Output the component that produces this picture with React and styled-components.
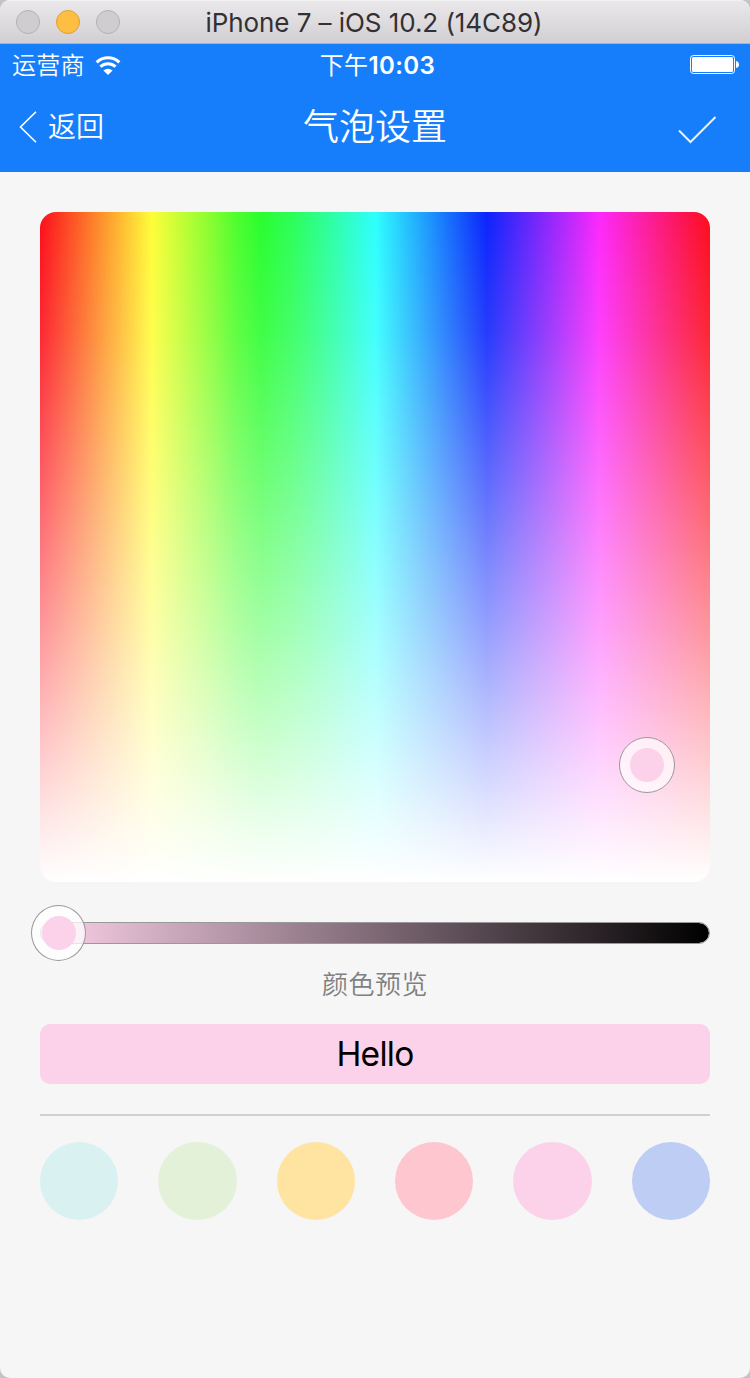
import React from 'react';
import styled, { createGlobalStyle } from 'styled-components';

const pink = '#fcd2ea';
const swatches = ['#d9f1f1', '#e3f1d9', '#ffe3a0', '#fec7cf', pink, '#bdcdf3'];

const GlobalStyle = createGlobalStyle`
  * { box-sizing: border-box; }
  body { margin: 0; background: #c4c4c4; }
`;

const Window = styled.div`
  width: 750px;
  height: 1378px;
  display: flex;
  flex-direction: column;
  overflow: hidden;
  border-radius: 10px;
  background: #f6f6f6;
  font-family: Inter, 'Noto Sans CJK SC', sans-serif;
`;

const TitleBar = styled.header`
  flex: none;
  height: 44px;
  display: grid;
  grid-template-columns: 190px 1fr 190px;
  align-items: center;
  background: linear-gradient(#eae8ea, #d1cfd1);
  border-top: 1px solid #f3f2f3;
  border-bottom: 1px solid #b3b0b4;
`;

const Lights = styled.div`
  display: flex;
  gap: 16px;
  padding-left: 16px;
`;

const Light = styled.span`
  width: 24px;
  height: 24px;
  border-radius: 50%;
  background: ${(p) => (p.$active ? '#fdbe41' : '#cfcdcf')};
  border: 1px solid ${(p) => (p.$active ? '#df9f35' : '#b3b1b3')};
`;

const WindowTitle = styled.div`
  justify-self: center;
  margin-right: 2px;
  padding-top: 2px;
  white-space: nowrap;
  font-size: 26px;
  line-height: 40px;
  letter-spacing: -0.06px;
  color: #333033;
`;

const Header = styled.div`
  flex: none;
  height: 128px;
  background: #167efb;
  color: #fff;
`;

const StatusBar = styled.div`
  height: 40px;
  display: grid;
  grid-template-columns: 1fr auto 1fr;
  align-items: center;
  padding: 0 11px 0 12px;
`;

const Carrier = styled.div`
  display: flex;
  align-items: center;
  gap: 10px;
  font-size: 24px;
  font-weight: 350;
  line-height: 36px;
  letter-spacing: 0.3px;
  padding-top: 3px;
`;

const Time = styled.div`
  font-size: 24px;
  font-weight: 600;
  line-height: 36px;
  letter-spacing: 0.4px;
  padding: 3px 0 0 4px;
`;

const TimePeriod = styled.span`
  font-weight: 400;
`;

const Battery = styled.svg`
  justify-self: end;
  margin-top: 2px;
`;

const NavBar = styled.nav`
  height: 88px;
  display: grid;
  grid-template-columns: 1fr auto 1fr;
  align-items: center;
  padding: 0 33px 0 19px;
`;

const BackButton = styled.div`
  display: flex;
  align-items: center;
  gap: 11px;
  font-size: 28px;
  font-weight: 350;
  line-height: 40px;
  margin-top: -2px;
`;

const NavTitle = styled.div`
  font-size: 36px;
  font-weight: 350;
  line-height: 52px;
  padding: 0 0 3px 14px;
`;

const CheckIcon = styled.svg`
  justify-self: end;
  margin-top: 3px;
`;

const Content = styled.main`
  flex: 1;
  display: flex;
  flex-direction: column;
  padding: 40px 40px 0;
`;

const hues = [
  '#fc0d1b',
  '#fffd38 16.7%',
  '#8dfd30 25.1%',
  '#50fd2e 29.2%',
  '#29fd2f 33%',
  '#2cfe58 37.6%',
  '#2dfe8c 41.8%',
  '#2dfffe 50.1%',
  '#0b24fb 66.7%',
  '#fd28fc 83.5%',
  '#fc0d1b',
].join(', ');

const fade = [
  'rgba(255, 255, 255, 0)',
  'rgba(255, 255, 255, 0.11) 18%',
  'rgba(255, 255, 255, 0.33) 40%',
  'rgba(255, 255, 255, 0.56) 62%',
  'rgba(255, 255, 255, 0.72) 76%',
  'rgba(255, 255, 255, 0.91) 92%',
  '#fff',
].join(', ');

const Spectrum = styled.div`
  flex: none;
  position: relative;
  height: 670px;
  border-radius: 16px;
  background: linear-gradient(${fade}), linear-gradient(90deg, ${hues});
`;

const Thumb = styled.div`
  position: absolute;
  left: ${(p) => p.$x}px;
  top: ${(p) => p.$y}px;
  width: ${(p) => p.$width || 56}px;
  height: 56px;
  display: grid;
  place-items: center;
  border: 1px solid #999;
  border-radius: 50%;
  background: rgba(255, 255, 255, ${(p) => p.$alpha});

  &::after {
    content: '';
    width: 34px;
    height: 34px;
    border-radius: 50%;
    background: ${pink};
  }
`;

const Track = styled.div`
  flex: none;
  position: relative;
  height: 22px;
  margin-top: 40px;
  border: 1px solid #999;
  border-radius: 11px;
  background: linear-gradient(90deg, ${pink}, #000) padding-box;
`;

const Caption = styled.div`
  margin-top: 21px;
  height: 40px;
  line-height: 40px;
  text-align: center;
  font-size: 26px;
  font-weight: 350;
  letter-spacing: 0.5px;
  color: #808080;
`;

const Preview = styled.div`
  flex: none;
  height: 60px;
  margin-top: 19px;
  border-radius: 10px;
  background: ${pink};
  line-height: 61px;
  text-align: center;
  font-size: 33.5px;
  letter-spacing: -0.7px;
  color: #000;
`;

const Divider = styled.hr`
  width: 100%;
  height: 2px;
  margin: 30px 0 26px;
  border: 0;
  background: #d0d0d0;
`;

const Swatches = styled.div`
  display: grid;
  grid-template-columns: repeat(6, 1fr);
  gap: 40px;
`;

const Swatch = styled.span`
  aspect-ratio: 1;
  border-radius: 50%;
  background: ${(p) => p.$color};
`;

export default function App() {
  return (
    <>
      <GlobalStyle />
      <Window>
        <TitleBar>
          <Lights>
            <Light />
            <Light $active />
            <Light />
          </Lights>
          <WindowTitle>iPhone 7 – iOS 10.2 (14C89)</WindowTitle>
        </TitleBar>
        <Header>
          <StatusBar>
            <Carrier>
              运营商
              <svg width="26" height="20" viewBox="0 0 26 20" fill="none" stroke="#fff">
                <path d="M1.7 6.4a16.2 16.2 0 0 1 22.6 0" strokeWidth="3.1" />
                <path d="M5.4 10.7a11 11 0 0 1 15.2 0" strokeWidth="3" />
                <path d="M8.4 14.4Q13 11 17.6 14.4L13 19Z" fill="#fff" stroke="none" />
              </svg>
            </Carrier>
            <Time><TimePeriod>下午</TimePeriod>10:03</Time>
            <Battery width="49" height="20" viewBox="0 0 49 20">
              <rect x="0.5" y="0.5" width="44" height="18" rx="3" fill="none" stroke="#fff" />
              <rect x="2" y="2" width="41" height="15" rx="1.5" fill="#fff" />
              <path d="M46 6q3 .5 3 3.5t-3 3.5z" fill="#fff" />
            </Battery>
          </StatusBar>
          <NavBar>
            <BackButton>
              <svg width="18" height="32" viewBox="0 0 18 32" fill="none" stroke="#fff" strokeWidth="1.6">
                <path d="M17 0.7L1.5 16L17 31.3" />
              </svg>
              返回
            </BackButton>
            <NavTitle>气泡设置</NavTitle>
            <CheckIcon width="39" height="29" viewBox="0 0 39 29" fill="none" stroke="#fff" strokeOpacity="0.9" strokeWidth="2">
              <path d="M1 15.5L12.5 27L37.5 2" />
            </CheckIcon>
          </NavBar>
        </Header>
        <Content>
          <Spectrum>
            <Thumb $x={579} $y={525} $alpha={0.7} />
          </Spectrum>
          <Track>
            <Thumb $x={-10} $y={-18} $width={55} $alpha={0.75} />
          </Track>
          <Caption>颜色预览</Caption>
          <Preview>Hello</Preview>
          <Divider />
          <Swatches>
            {swatches.map((color) => <Swatch key={color} $color={color} />)}
          </Swatches>
        </Content>
      </Window>
    </>
  );
}
